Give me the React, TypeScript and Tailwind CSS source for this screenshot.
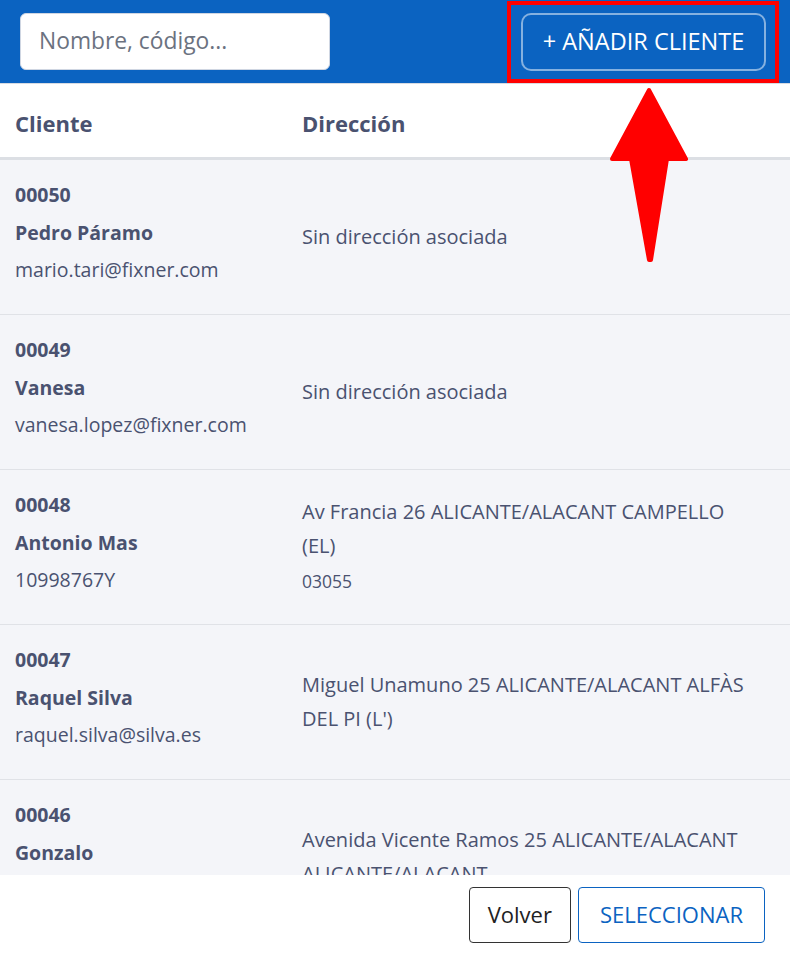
import React from "react";

type Row = {
  code: string;
  name: string;
  sub?: string;
  address?: string;
  zip?: string;
};

const rows: Row[] = [
  { code: "00050", name: "Pedro Páramo", sub: "mario.tari@fixner.com" },
  { code: "00049", name: "Vanesa", sub: "vanesa.lopez@fixner.com" },
  {
    code: "00048",
    name: "Antonio Mas",
    sub: "10998767Y",
    address: "Av Francia 26 ALICANTE/ALACANT CAMPELLO (EL)",
    zip: "03055",
  },
  {
    code: "00047",
    name: "Raquel Silva",
    sub: "raquel.silva@silva.es",
    address: "Miguel Unamuno 25 ALICANTE/ALACANT ALFÀS DEL PI (L')",
  },
  {
    code: "00046",
    name: "Gonzalo",
    address: "Avenida Vicente Ramos 25 ALICANTE/ALACANT ALICANTE/ALACANT",
  },
];

export default function App() {
  return (
    <div
      className="relative w-[790px] h-[954px] overflow-hidden bg-white text-[#4a5270]"
      style={{ fontFamily: '"Open Sans", "Noto Sans", sans-serif' }}
    >
      {/* Top bar */}
      <div className="h-[84px] bg-[#0b63c1] border-b border-[#d7dbe2] flex items-center justify-between pl-[20px] pr-[24px]">
        <div className="w-[310px] h-[57px] bg-white rounded-[6px] border border-[#cfd6e2] flex items-center pl-[18px] text-[22.8px] text-[#6b7280]">
          Nombre, código...
        </div>
        <button className="w-[245px] h-[58px] rounded-[10px] border-2 border-white/50 bg-[#0b63c1] text-white text-[23.5px] flex items-center justify-center">
          + AÑADIR CLIENTE
        </button>
      </div>

      {/* Table head */}
      <div className="h-[76px] pt-[5px] bg-white border-b-[3px] border-[#dcdfe4] flex items-center text-[22px] font-bold">
        <div className="w-[287px] pl-[15px]">Cliente</div>
        <div className="pl-[15px]">Dirección</div>
      </div>

      {/* Rows */}
      <div className="h-[715px] overflow-hidden bg-[#f4f5f9]">
        {rows.map((r) => (
          <div
            key={r.code}
            className="h-[155px] border-b border-[#e0e2e7] flex items-center shrink-0"
          >
            <div className="w-[287px] self-start pl-[15px] pt-[16px] flex flex-col text-[19.5px] leading-[37.5px]">
              <span className="font-bold">{r.code}</span>
              <span className="font-bold">{r.name}</span>
              {r.sub && <span>{r.sub}</span>}
            </div>
            <div className="flex-1 pl-[15px] pr-[30px]">
              <div className="text-[20px] leading-[34px]">
                {r.address ?? "Sin dirección asociada"}
              </div>
              {r.zip && (
                <div className="text-[17.5px] leading-[36px]">{r.zip}</div>
              )}
            </div>
          </div>
        ))}
      </div>

      {/* Footer */}
      <div className="h-[79px] bg-white flex items-center justify-end gap-[7px] pr-[25px]">
        <button className="h-[56px] px-[18px] rounded-[4px] border border-[#333] text-[#222] text-[22px]">
          Volver
        </button>
        <button className="h-[56px] px-[21px] rounded-[4px] border border-[#0b63c1] text-[#0b63c1] text-[22px]">
          SELECCIONAR
        </button>
      </div>

      {/* Annotation overlay */}
      <div className="absolute left-[507px] top-[1px] w-[272px] h-[82px] border-[4px] border-[#ff0000] pointer-events-none" />
      <svg
        className="absolute left-0 top-0 pointer-events-none"
        width="790"
        height="954"
        viewBox="0 0 790 954"
      >
        <polygon
          points="649,90 686,159 667,159 651,260 649,260 631,159 612,159"
          fill="#ff0000"
          stroke="#ff0000"
          strokeWidth="4"
          strokeLinejoin="round"
        />
      </svg>
    </div>
  );
}
